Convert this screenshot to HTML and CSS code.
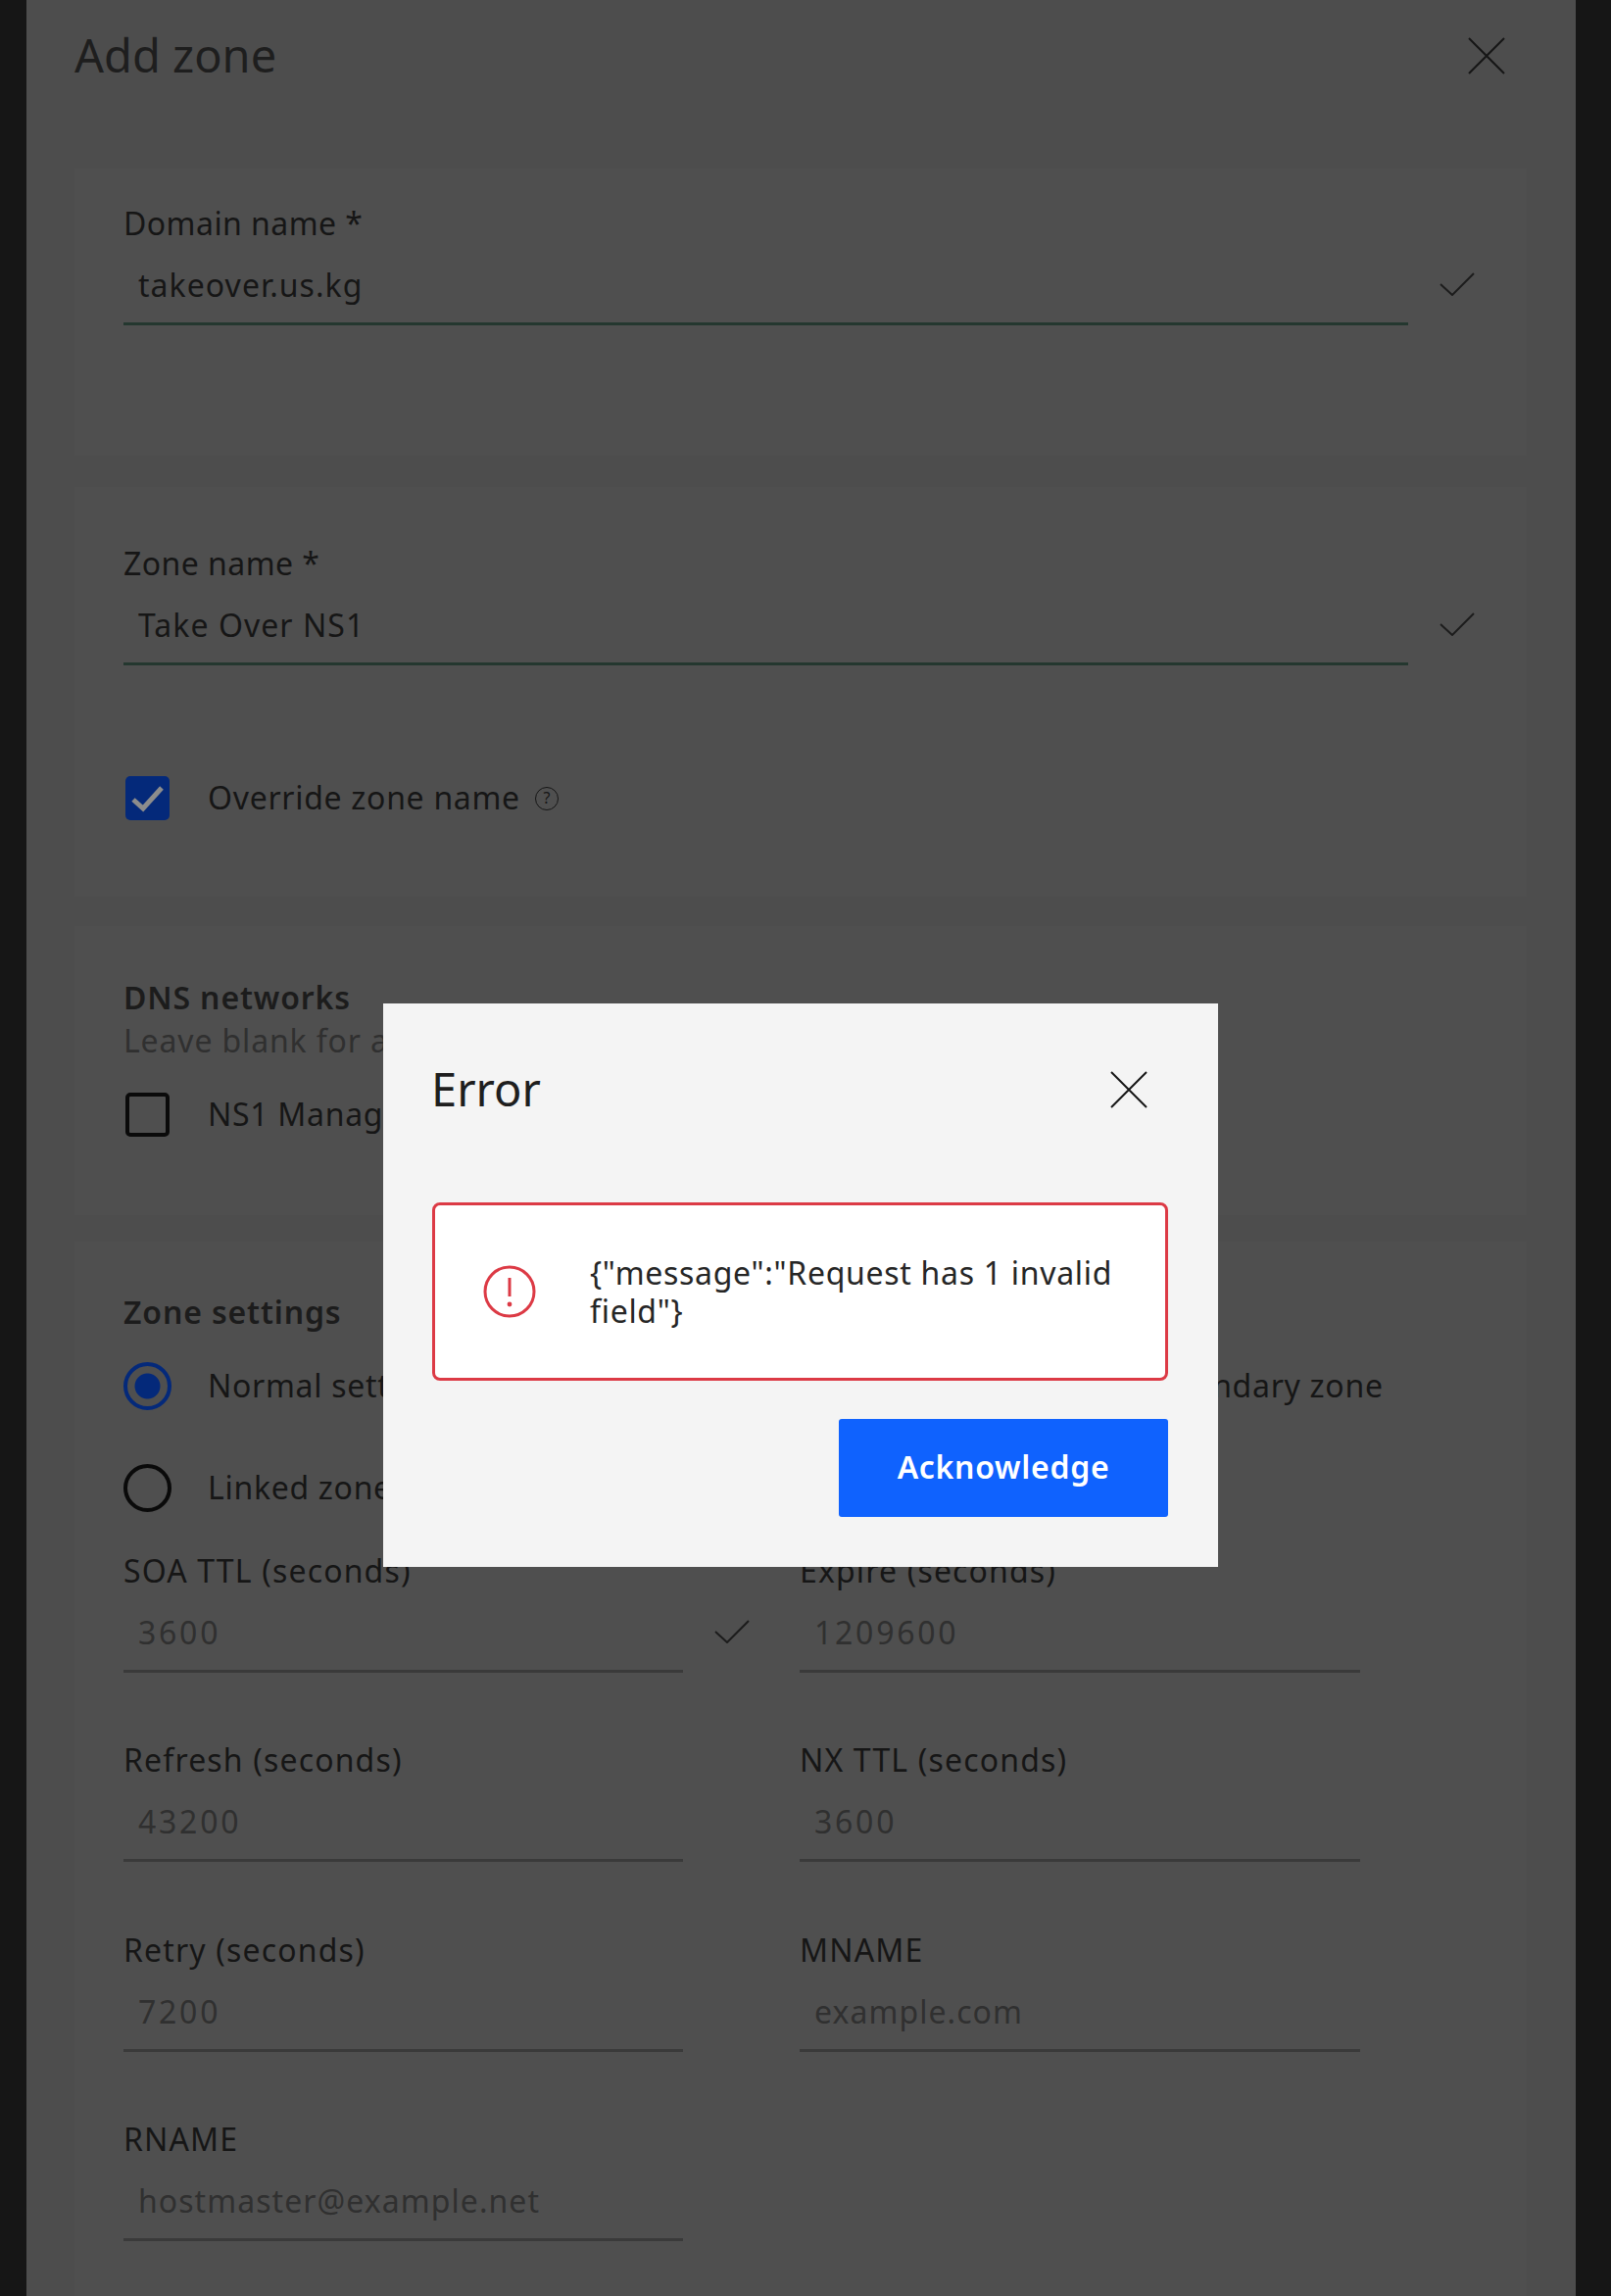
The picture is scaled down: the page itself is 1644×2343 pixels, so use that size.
FILE: index.html
```html
<!DOCTYPE html>
<html lang="en">
<head>
  <meta charset="UTF-8" />
  <title>Add zone</title>
  <link rel="stylesheet" href="styles.css">
</head>
<body>
  <div class="panel">
    <div class="panel-header">
      <h1>Add zone</h1>
      <svg class="close" viewBox="0 0 38 38"><path d="M1 1L37 37M37 1L1 37"/></svg>
    </div>

    <section class="card card-domain">
      <div class="field">
        <label>Domain name *</label>
        <div class="input-row">
          <div class="input valid">takeover.us.kg</div>
          <svg class="check" viewBox="0 0 36 24"><path d="M1 12L13 23L35 1"/></svg>
        </div>
      </div>
    </section>

    <section class="card card-zone">
      <div class="field">
        <label>Zone name *</label>
        <div class="input-row">
          <div class="input valid">Take Over NS1</div>
          <svg class="check" viewBox="0 0 36 24"><path d="M1 12L13 23L35 1"/></svg>
        </div>
      </div>
      <div class="option option-override">
        <span class="checkbox checked">
          <svg viewBox="0 0 45 45"><path d="M8 24L18 33L37 12"/></svg>
        </span>
        <span class="option-text">Override zone name</span>
        <span class="help">?</span>
      </div>
    </section>

    <section class="card card-networks">
      <h2>DNS networks</h2>
      <p class="hint">Leave blank for all networks</p>
      <div class="option option-ns1">
        <span class="checkbox"></span>
        <span class="option-text">NS1 Managed</span>
      </div>
    </section>

    <section class="card card-settings">
      <h2>Zone settings</h2>
      <div class="radios">
        <div class="option"><span class="radio selected"></span><span class="option-text">Normal settings</span></div>
        <div class="option radio-right"><span class="radio"></span><span class="option-text">Secondary zone</span></div>
        <div class="option"><span class="radio"></span><span class="option-text">Linked zone</span></div>
      </div>
      <div class="fields">
        <div class="field">
          <label class="wide">SOA TTL (seconds)</label>
          <div class="input-row">
            <div class="input placeholder num">3600</div>
            <svg class="check" viewBox="0 0 36 24"><path d="M1 12L13 23L35 1"/></svg>
          </div>
        </div>
        <div class="field">
          <label class="wide">Expire (seconds)</label>
          <div class="input-row"><div class="input placeholder num">1209600</div></div>
        </div>
        <div class="field">
          <label class="wide">Refresh (seconds)</label>
          <div class="input-row"><div class="input placeholder num">43200</div></div>
        </div>
        <div class="field">
          <label class="wide">NX TTL (seconds)</label>
          <div class="input-row"><div class="input placeholder num">3600</div></div>
        </div>
        <div class="field">
          <label class="wide">Retry (seconds)</label>
          <div class="input-row"><div class="input placeholder num">7200</div></div>
        </div>
        <div class="field">
          <label class="wide">MNAME</label>
          <div class="input-row"><div class="input placeholder">example.com</div></div>
        </div>
        <div class="field">
          <label class="wide">RNAME</label>
          <div class="input-row"><div class="input placeholder">hostmaster@example.net</div></div>
        </div>
      </div>
    </section>
  </div>

  <div class="modal">
    <div class="modal-header">
      <h3>Error</h3>
      <svg class="close" viewBox="0 0 38 38"><path d="M1 1L37 37M37 1L1 37"/></svg>
    </div>
    <div class="alert">
      <svg class="alert-icon" viewBox="0 0 54 54">
        <circle cx="27" cy="27" r="25"/>
        <path d="M27 13V32"/>
        <circle class="dot" cx="27" cy="40" r="2.4"/>
      </svg>
      <p>{"message":"Request has 1 invalid field"}</p>
    </div>
    <div class="modal-actions">
      <button>Acknowledge</button>
    </div>
  </div>
</body>
</html>
```

FILE: styles.css
```css
* {
  box-sizing: border-box;
}
html, body {
  height: 2343px;
  overflow: hidden;
}
body {
  margin: 0;
  padding: 0 36px 0 27px;
  background: #161616;
  color: #161616;
  font-family: 'Noto Sans', sans-serif;
  font-size: 32px;
}
.panel {
  height: 2343px;
  padding: 0 50px 0 49px;
  background: #4d4d4d;
  overflow: hidden;
}
.panel-header {
  display: flex;
  justify-content: space-between;
  align-items: center;
  height: 114px;
  padding-right: 22px;
  margin-bottom: 58px;
}
h1, h3 {
  margin: 0 0 3px;
  font-size: 47px;
  font-weight: 400;
  color: #1e1e1e;
}
h3 {
  margin-left: -1px;
}
.close {
  width: 38px;
  height: 38px;
  fill: none;
  stroke: #161616;
  stroke-width: 2;
}
.card {
  background: #4f4f4f;
  padding-left: 50px;
  margin-bottom: 30px;
}
.card-domain {
  padding-top: 36px;
  height: 293px;
  margin-bottom: 32px;
}
.card-zone {
  padding-top: 58px;
  height: 418px;
}
.card-networks {
  padding-top: 53px;
  height: 295px;
  margin-bottom: 27px;
}
.card-settings {
  padding-top: 52px;
  height: 1100px;
}
label {
  display: block;
  line-height: 40px;
  letter-spacing: .45px;
}
label.wide {
  letter-spacing: 1.15px;
}
.input-row {
  display: flex;
  align-items: center;
  margin-top: 5px;
}
.input {
  flex: none;
  width: 100%;
  padding: 0 0 1px 15px;
  line-height: 75px;
  letter-spacing: 1.05px;
  border-bottom: 3px solid #3a3a3a;
}
.input.num {
  letter-spacing: 2.75px;
}
.card-domain .input, .card-zone .input {
  width: 1311px;
}
.input.valid {
  border-bottom-color: #24372f;
}
.placeholder {
  color: #303030;
}
.check {
  flex: none;
  width: 36px;
  height: 24px;
  margin: 0 0 6px 32px;
  fill: none;
  stroke: #1c1c1c;
  stroke-width: 2;
}
.option {
  display: flex;
  align-items: center;
  gap: 39px;
}
.option-text {
  padding-bottom: 2px;
  letter-spacing: .7px;
}
.option-override {
  margin-top: 113px;
  padding-left: 2px;
}
.option-override .help {
  margin-left: -24px;
}
.option-ns1 {
  margin-top: 31px;
  padding-left: 2px;
}
.checkbox {
  flex: none;
  width: 45px;
  height: 45px;
  border: 4.5px solid #0a0a0a;
  border-radius: 5px;
}
.checkbox.checked {
  border: none;
  background: #04297a;
}
.checkbox svg {
  display: block;
  fill: none;
  stroke: #8c8c8c;
  stroke-width: 5;
}
.help {
  flex: none;
  width: 24px;
  height: 24px;
  border: 1.5px solid #161616;
  border-radius: 50%;
  font-size: 16px;
  line-height: 21px;
  text-align: center;
}
h2 {
  margin: 0;
  font-size: 32px;
  font-weight: 600;
  line-height: 40px;
  letter-spacing: .85px;
  color: #1c1c1c;
}
.hint {
  margin: 2px 0 0;
  line-height: 44px;
  letter-spacing: .85px;
  color: #303030;
}
.radios {
  display: grid;
  grid-template-columns: 476px 476px 1fr;
  row-gap: 55px;
  margin-top: 31px;
}
.radio-right {
  grid-column: 3;
}
.radios .option {
  gap: 37px;
}
.radio {
  flex: none;
  width: 49px;
  height: 49px;
  border: 4.5px solid #0a0a0a;
  border-radius: 50%;
}
.radio.selected {
  border-color: #04297a;
  background: radial-gradient(circle, #04297a 12.5px, transparent 13.5px);
}
.fields {
  display: grid;
  grid-template-columns: 571px 572px;
  column-gap: 119px;
  row-gap: 69.33px;
  margin-top: 40px;
}
.modal {
  position: absolute;
  left: 391px;
  top: 1024px;
  width: 852px;
  height: 575px;
  padding: 0 51px 0 50px;
  background: #f4f4f4;
}
.modal-header {
  display: flex;
  justify-content: space-between;
  align-items: center;
  height: 176px;
  padding-right: 21px;
  margin-bottom: 27px;
}
.alert {
  display: flex;
  align-items: center;
  height: 182px;
  padding: 0 28px 0 49px;
  background: #fff;
  border: 3px solid #dc3a45;
  border-radius: 8px;
  line-height: 39px;
  letter-spacing: .7px;
  color: #262626;
}
.alert-icon {
  flex: none;
  width: 54px;
  height: 54px;
  margin-right: 55px;
  fill: none;
  stroke: #dc3a45;
  stroke-width: 3;
}
.alert-icon .dot {
  fill: #dc3a45;
  stroke: none;
}
.alert p {
  margin: 0;
}
.modal-actions {
  display: flex;
  justify-content: flex-end;
  margin-top: 39px;
}
button {
  width: 336px;
  height: 100px;
  padding: 0 0 3px;
  border: none;
  border-radius: 3px;
  background: #0f62fe;
  color: #fff;
  font-family: inherit;
  font-size: 32px;
  font-weight: 600;
  letter-spacing: .7px;
}
```
